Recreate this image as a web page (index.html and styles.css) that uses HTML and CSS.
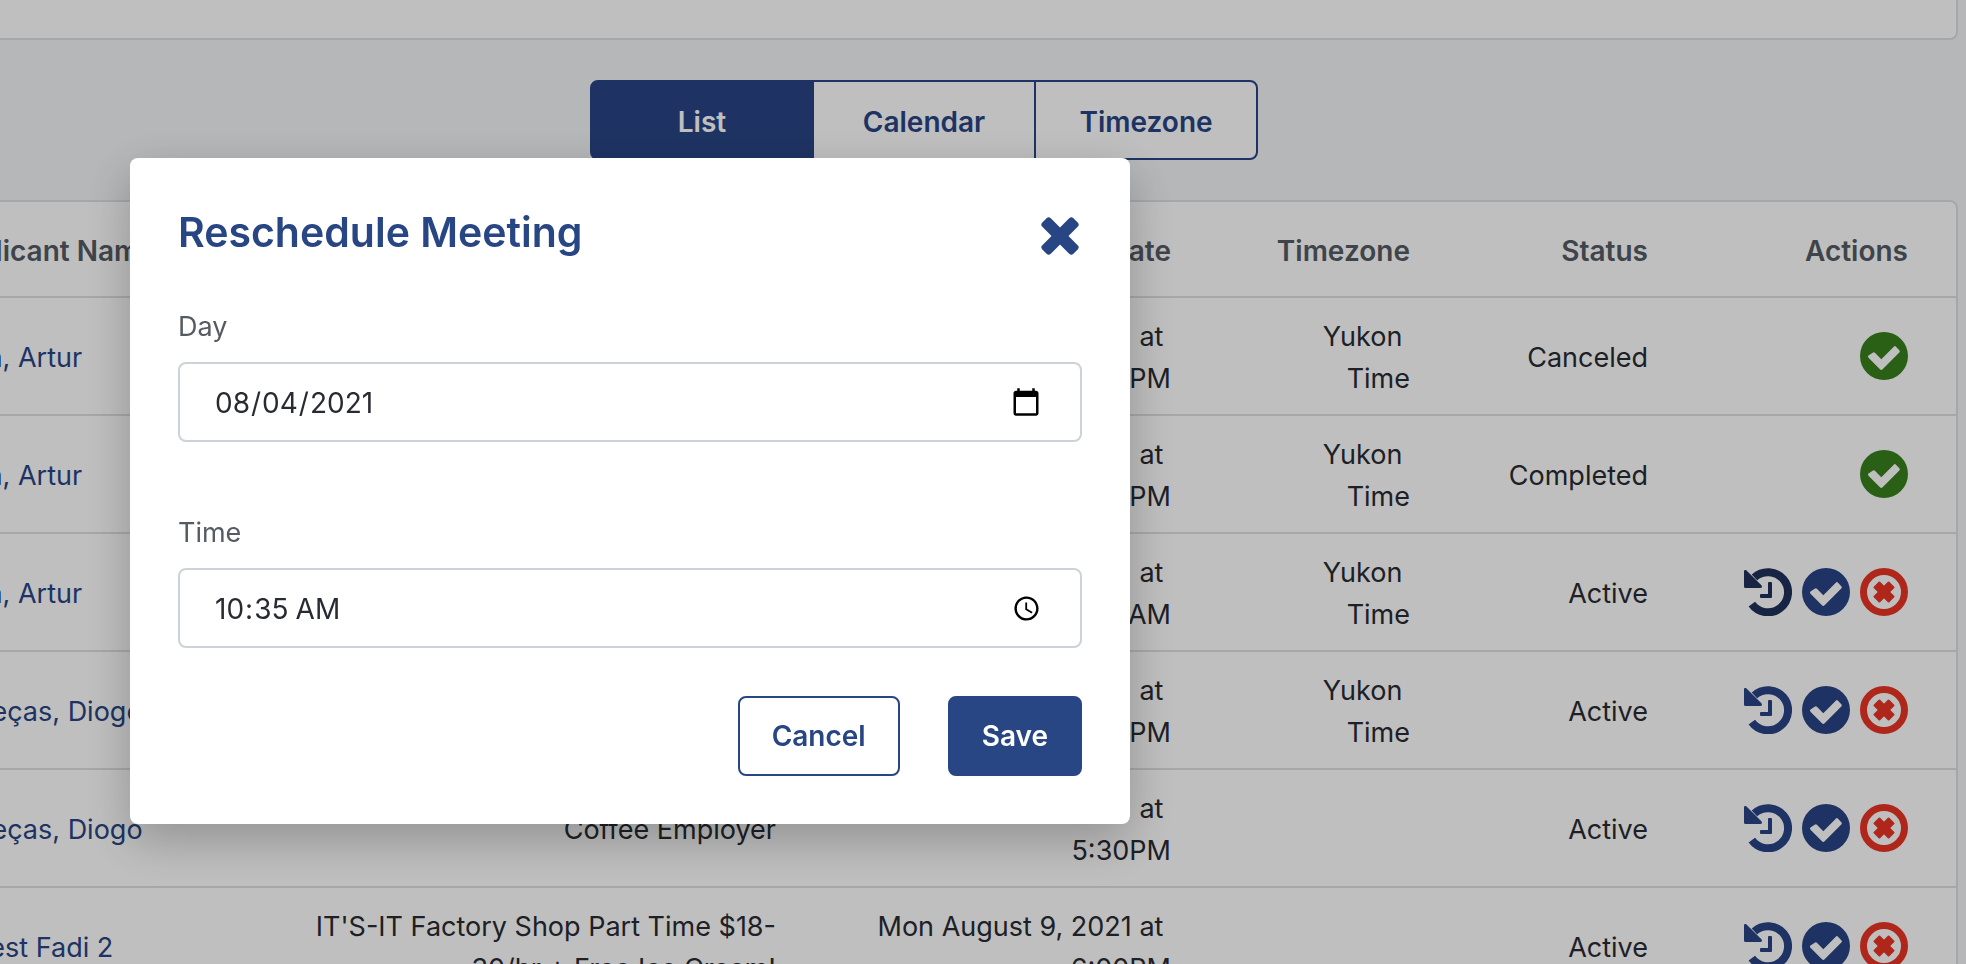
FILE: index.html
```html
<!DOCTYPE html>
<html lang="en">
<head>
    <meta charset="UTF-8">
    <meta name="viewport" content="width=device-width, initial-scale=1.0">
    <title>Meetings</title>
    <link rel="stylesheet" href="styles.css">
</head>
<body>

<!-- Shared icons -->
<svg class="sprite" aria-hidden="true">
    <symbol id="icon-history" viewBox="0 0 48 48">
        <path d="M7.8 36.2A20.1 20.1 0 1 0 10.4 9.4" fill="none" stroke="currentColor" stroke-width="8"/>
        <path d="M0 3.4C0 2 1.6 1.6 2.5 2.5L17.4 17.2C18.6 18.5 17.7 20 16.4 20H1.5A1.5 1.5 0 0 1 0 18.5Z" fill="currentColor"/>
        <path d="M25 14h2a1 1 0 0 1 1 1v14a1 1 0 0 1-1 1h-10a1 1 0 0 1-1-1v-2a1 1 0 0 1 1-1h7v-11a1 1 0 0 1 1-1z" fill="currentColor"/>
    </symbol>
    <symbol id="icon-check" viewBox="0 0 48 48">
        <path fill="currentColor" fill-rule="evenodd" d="M24 0a24 24 0 1 1 0 48a24 24 0 0 1 0-48zM8.5 23.5a1.5 1.5 0 0 0 0 2.2L20 37.2a1.8 1.8 0 0 0 2.6 0L39.3 20.5a1.5 1.5 0 0 0 0-2.2L36 14.7a1.5 1.5 0 0 0-2.2 0L21.3 27.2L14.9 20.8a1.5 1.5 0 0 0-2.2 0z"/>
    </symbol>
    <symbol id="icon-cancel" viewBox="0 0 48 48">
        <circle cx="24" cy="24" r="20.5" fill="none" stroke="currentColor" stroke-width="7"/>
        <g fill="currentColor" transform="rotate(45 24 24)">
            <rect x="13" y="19.5" width="22" height="9" rx="1"/>
            <rect x="19.5" y="13" width="9" height="22" rx="1"/>
        </g>
    </symbol>
    <symbol id="icon-close" viewBox="0 0 38 38">
        <g fill="currentColor" transform="rotate(45 19 19)">
            <rect x="-3" y="13" width="44" height="12" rx="3"/>
            <rect x="13" y="-3" width="12" height="44" rx="3"/>
        </g>
    </symbol>
</svg>

<div class="page">
    <section class="panel"></section>

    <div class="tabs">
        <button class="tab active" type="button">List</button>
        <button class="tab" type="button">Calendar</button>
        <button class="tab" type="button">Timezone</button>
    </div>

    <div class="table-card">
        <table class="meetings">
            <colgroup>
                <col class="col-name">
                <col class="col-job">
                <col class="col-date">
                <col class="col-zone">
                <col class="col-status">
                <col class="col-actions">
            </colgroup>
            <thead>
                <tr>
                    <th>Applicant Name</th>
                    <th>Job</th>
                    <th>Date</th>
                    <th>Timezone</th>
                    <th>Status</th>
                    <th>Actions</th>
                </tr>
            </thead>
            <tbody>
                <tr>
                    <td><a href="#">Rosa, Artur</a></td>
                    <td>Coffee Employer</td>
                    <td>Tue August 3, 2021 at&nbsp; 1:30PM</td>
                    <td>Yukon&nbsp; Time</td>
                    <td>Canceled</td>
                    <td><div class="actions">
                        <svg class="icon green"><use href="#icon-check"/></svg>
                    </div></td>
                </tr>
                <tr>
                    <td><a href="#">Rosa, Artur</a></td>
                    <td>Coffee Employer</td>
                    <td>Tue August 3, 2021 at&nbsp; 2:30PM</td>
                    <td>Yukon&nbsp; Time</td>
                    <td>Completed</td>
                    <td><div class="actions">
                        <svg class="icon green"><use href="#icon-check"/></svg>
                    </div></td>
                </tr>
                <tr>
                    <td><a href="#">Rosa, Artur</a></td>
                    <td>Coffee Employer</td>
                    <td>Tue August 3, 2021 at&nbsp; 10:35AM</td>
                    <td>Yukon&nbsp; Time</td>
                    <td>Active</td>
                    <td><div class="actions">
                        <button class="action navy" type="button" aria-label="Reschedule"><svg class="icon"><use href="#icon-history"/></svg></button>
                        <button class="action blue" type="button" aria-label="Complete"><svg class="icon"><use href="#icon-check"/></svg></button>
                        <button class="action red" type="button" aria-label="Cancel meeting"><svg class="icon"><use href="#icon-cancel"/></svg></button>
                    </div></td>
                </tr>
                <tr>
                    <td><a href="#">Cabeças, Diogo</a></td>
                    <td>Coffee Employer</td>
                    <td>Thu August 5, 2021 at&nbsp; 3:30PM</td>
                    <td>Yukon&nbsp; Time</td>
                    <td>Active</td>
                    <td><div class="actions">
                        <button class="action blue" type="button" aria-label="Reschedule"><svg class="icon"><use href="#icon-history"/></svg></button>
                        <button class="action blue" type="button" aria-label="Complete"><svg class="icon"><use href="#icon-check"/></svg></button>
                        <button class="action red" type="button" aria-label="Cancel meeting"><svg class="icon"><use href="#icon-cancel"/></svg></button>
                    </div></td>
                </tr>
                <tr>
                    <td><a href="#">Cabeças, Diogo</a></td>
                    <td>Coffee Employer</td>
                    <td>Fri August 6, 2021 at&nbsp; 5:30PM</td>
                    <td></td>
                    <td>Active</td>
                    <td><div class="actions">
                        <button class="action blue" type="button" aria-label="Reschedule"><svg class="icon"><use href="#icon-history"/></svg></button>
                        <button class="action blue" type="button" aria-label="Complete"><svg class="icon"><use href="#icon-check"/></svg></button>
                        <button class="action red" type="button" aria-label="Cancel meeting"><svg class="icon"><use href="#icon-cancel"/></svg></button>
                    </div></td>
                </tr>
                <tr>
                    <td><a href="#">A. Test Fadi 2</a></td>
                    <td>IT'S-IT Factory Shop Part Time $18-30/hr + Free Ice Cream!</td>
                    <td>Mon August 9, 2021 at&nbsp; 6:00PM</td>
                    <td></td>
                    <td>Active</td>
                    <td><div class="actions">
                        <button class="action blue" type="button" aria-label="Reschedule"><svg class="icon"><use href="#icon-history"/></svg></button>
                        <button class="action blue" type="button" aria-label="Complete"><svg class="icon"><use href="#icon-check"/></svg></button>
                        <button class="action red" type="button" aria-label="Cancel meeting"><svg class="icon"><use href="#icon-cancel"/></svg></button>
                    </div></td>
                </tr>
            </tbody>
        </table>
    </div>
</div>

<!-- Reschedule dialog -->
<div class="overlay">
    <form class="modal" role="dialog" aria-labelledby="modalTitle">
        <div class="modal-header">
            <h2 id="modalTitle">Reschedule Meeting</h2>
            <button class="close" type="button" aria-label="Close">
                <svg><use href="#icon-close"/></svg>
            </button>
        </div>

        <div class="modal-body">
            <div class="field">
                <label for="day">Day</label>
                <input class="day" type="date" id="day" value="2021-08-04">
            </div>

            <div class="field">
                <label for="time">Time</label>
                <input class="time" type="time" id="time" value="10:35">
            </div>
        </div>

        <div class="modal-footer">
            <button class="btn" type="button">Cancel</button>
            <button class="btn primary" type="submit">Save</button>
        </div>
    </form>
</div>

</body>
</html>
```
FILE: styles.css
```css
* {
    box-sizing: border-box;
}

body {
    font-family: Inter, "Liberation Sans", sans-serif;
    font-size: 27px;
    line-height: 42px;
    margin: 0;
    height: 100vh;
    overflow: hidden;
    background: #f2f4f6;
    color: #292b32;
}

button, input {
    font: inherit;
    font-size: 28px;
}

button {
    cursor: pointer;
}

.sprite {
    position: absolute;
    width: 0;
    height: 0;
}

/* the list is scrolled a little to the right */
.page {
    margin: 0 8px 0 -110px;
}

.panel {
    height: 40px;
    background: #fff;
    border: 2px solid #dde0e5;
    border-top: none;
    border-radius: 0 0 8px 8px;
}

.tabs {
    display: flex;
    justify-content: center;
    margin: 40px 0;
}

.tab {
    width: 224px;
    height: 80px;
    padding: 4px 0 0;
    background: #fff;
    border: 2px solid #284584;
    color: #284584;
    font-weight: 600;
}

.tab + .tab {
    margin-left: -2px;
}

.tab:first-child {
    border-radius: 8px 0 0 8px;
}

.tab:last-child {
    border-radius: 0 8px 8px 0;
}

.tab.active {
    background: #284584;
    color: #fff;
}

.table-card {
    background: #fff;
    border: 2px solid #dde0e5;
    border-radius: 8px;
}

.meetings {
    width: 100%;
    table-layout: fixed;
    border-collapse: separate;
    border-spacing: 0;
}

.col-name { width: 358px; }
.col-date { width: 395px; }
.col-zone { width: 239px; }
.col-status { width: 238px; }
.col-actions { width: 260px; }

th, td {
    padding: 18px 48px 14px;
    border-bottom: 2px solid #dde0e5;
    text-align: right;
}

th {
    height: 96px;
    color: #555b63;
    font-size: 28px;
    font-weight: 600;
}

td {
    height: 118px;
}

th:first-child, td:first-child {
    text-align: left;
    white-space: nowrap;
}

td:last-child {
    padding: 16px 48px;
}

.meetings a {
    color: #284584;
    text-decoration: none;
}

.actions {
    display: flex;
    justify-content: flex-end;
    gap: 10px;
}

.action {
    padding: 0;
    border: none;
    background: none;
}

.icon {
    display: block;
    width: 48px;
    height: 48px;
}

.navy { color: #20305a; }
.blue { color: #284584; }
.red { color: #ea3323; }
.green { color: #38801c; }

.overlay {
    position: fixed;
    inset: 0;
    background: rgba(0, 0, 0, 0.25);
}

.modal {
    width: 1000px;
    margin: 158px 0 0 130px;
    padding: 48px;
    background: #fff;
    border-radius: 8px;
    box-shadow: 0 16px 48px rgba(0, 0, 0, 0.24);
}

.modal-header {
    display: flex;
    justify-content: space-between;
    align-items: flex-start;
    margin-bottom: 40px;
}

.modal h2 {
    margin: 0;
    font-size: 41px;
    line-height: 52px;
    font-weight: 600;
    color: #284584;
}

.close {
    height: 60px;
    padding: 0 3px;
    border: none;
    background: none;
    color: #284584;
}

.close svg {
    display: block;
    width: 38px;
    height: 38px;
}

.modal-body {
    display: flex;
    flex-direction: column;
    gap: 70px;
    margin-bottom: 48px;
}

.field label {
    display: block;
    margin-bottom: 14px;
    color: #555b63;
}

.field input {
    display: block;
    width: 100%;
    height: 80px;
    padding: 2px 36px 0 34px;
    background: #fff;
    border: 2px solid #cdd2d9;
    border-radius: 8px;
    color: #292b32;
}

.day::-webkit-calendar-picker-indicator {
    width: 32px;
    height: 32px;
}

.modal-footer {
    display: flex;
    justify-content: flex-end;
    gap: 48px;
}

.btn {
    height: 80px;
    padding: 0 32px;
    background: #fff;
    border: 2px solid #284584;
    border-radius: 8px;
    color: #284584;
    font-weight: 600;
}

.btn.primary {
    background: #284584;
    color: #fff;
}
```
